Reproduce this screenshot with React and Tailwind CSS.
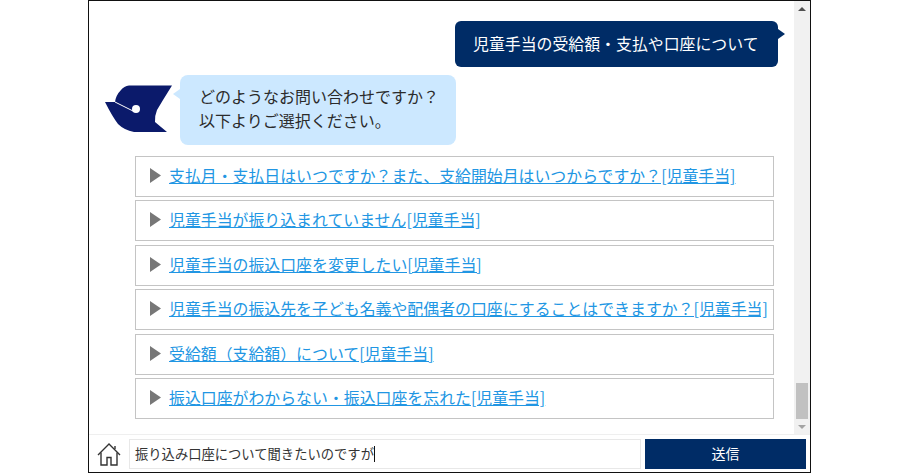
import React from "react";

const faqs = [
  "支払月・支払日はいつですか？また、支給開始月はいつからですか？[児童手当]",
  "児童手当が振り込まれていません[児童手当]",
  "児童手当の振込口座を変更したい[児童手当]",
  "児童手当の振込先を子ども名義や配偶者の口座にすることはできますか？[児童手当]",
  "受給額（支給額）について[児童手当]",
  "振込口座がわからない・振込口座を忘れた[児童手当]",
];

const fontClass = "font-['Noto_Sans_CJK_JP','Liberation_Sans',sans-serif]";

function Logo() {
  return (
    <svg width="67" height="48" viewBox="0 0 67 48" className="shrink-0">
      <path
        d="M24 0.5 L67 0.5 L58 15 L52 25 Q49.5 31 50 37 L62 47 L29 47 Q19 45 13 39 Q7 31 0 17 L10 17 Q11 10 16 5 Q19 1 24 0.5 Z"
        fill="#0b1a6b"
      />
      <path d="M10 17 L28 26" stroke="#fff" strokeWidth="1" />
      <circle cx="31" cy="24" r="4" fill="#fff" />
    </svg>
  );
}

function FaqRow({ text }) {
  return (
    <div className="h-[41px] border border-[#c4c4c4] pl-[14px] flex items-center bg-white">
      <svg width="11" height="15" viewBox="0 0 11 15" className="shrink-0 mr-[8px] mb-[2px]">
        <path d="M0 0 L11 7.5 L0 15 Z" fill="#777" />
      </svg>
      <a href="#" className="text-[15.9px] leading-[24px] text-[#2196e3] underline whitespace-nowrap mb-[1px]">
        {text}
      </a>
    </div>
  );
}

export default function App() {
  return (
    <div className={`h-[473px] bg-white flex pl-[88px] ${fontClass}`}>
      <div className="w-[723px] h-[473px] border border-[#111] flex flex-col">
        <div className="flex-1 flex min-h-0">
          <div className="flex-1 overflow-hidden pt-[20px] pr-[16px] pl-[16px]">
            <div className="flex justify-end">
              <div className="relative h-[46px] w-[323px] rounded-[6px] bg-[#002c66] text-white text-[15.9px] flex items-center pl-[18px] pb-[1px]">
                児童手当の受給額・支払や口座について
                <span className="absolute left-full top-[8px] border-y-[5px] border-y-transparent border-l-[7px] border-l-[#002c66]" />
              </div>
            </div>
            <div className="flex items-start mt-[8px]">
              <div className="mt-[10px] mr-[8px]">
                <Logo />
              </div>
              <div className="relative h-[70px] w-[276px] rounded-[8px] bg-[#cce8ff] text-[#2b2b2b] text-[16px] leading-[24px] pl-[19px] pt-[9px]">
                <span className="absolute right-full top-[14px] border-y-[5px] border-y-transparent border-r-[7px] border-r-[#cce8ff]" />
                どのようなお問い合わせですか？
                <br />
                以下よりご選択ください。
              </div>
            </div>
            <div className="ml-[30px] mr-[4px] mt-[11px] flex flex-col gap-[3.4px]">
              {faqs.map((f) => (
                <FaqRow key={f} text={f} />
              ))}
            </div>
          </div>
          <div className="w-[16px] bg-[#f1f1f1] flex flex-col items-center pt-[6px] pb-[5px]">
            <span className="border-x-[4px] border-x-transparent border-b-[4px] border-b-[#505050]" />
            <div className="flex-1" />
            <div className="w-[12px] h-[36px] bg-[#c1c1c1] mb-[6px]" />
            <span className="border-x-[4px] border-x-transparent border-t-[4px] border-t-[#a3a3a3]" />
          </div>
        </div>
        <div className="h-[38px] shrink-0 border-t border-[#efefef] flex items-center pl-[8px] pr-[4px] bg-white">
          <svg width="24" height="24" viewBox="0 0 24 24" fill="none" stroke="#333" strokeWidth="1.4" className="shrink-0">
            <path d="M1 13 L12 2 L23 13" />
            <path d="M4 10.5 V23 H10 V15.5 H14 V23 H20 V10.5" />
            <path d="M18 4 V7" />
          </svg>
          <div className="ml-[8px] h-[30px] w-[512px] border border-[#e8e8e8] flex items-center pl-[5px] text-[13.3px] text-[#333]">
            振り込み口座について聞きたいのですが
            <span className="w-px h-[16px] bg-[#111]" />
          </div>
          <button className="ml-[4px] h-[30px] w-[161px] bg-[#002c66] text-white text-[14px]">送信</button>
        </div>
      </div>
    </div>
  );
}
